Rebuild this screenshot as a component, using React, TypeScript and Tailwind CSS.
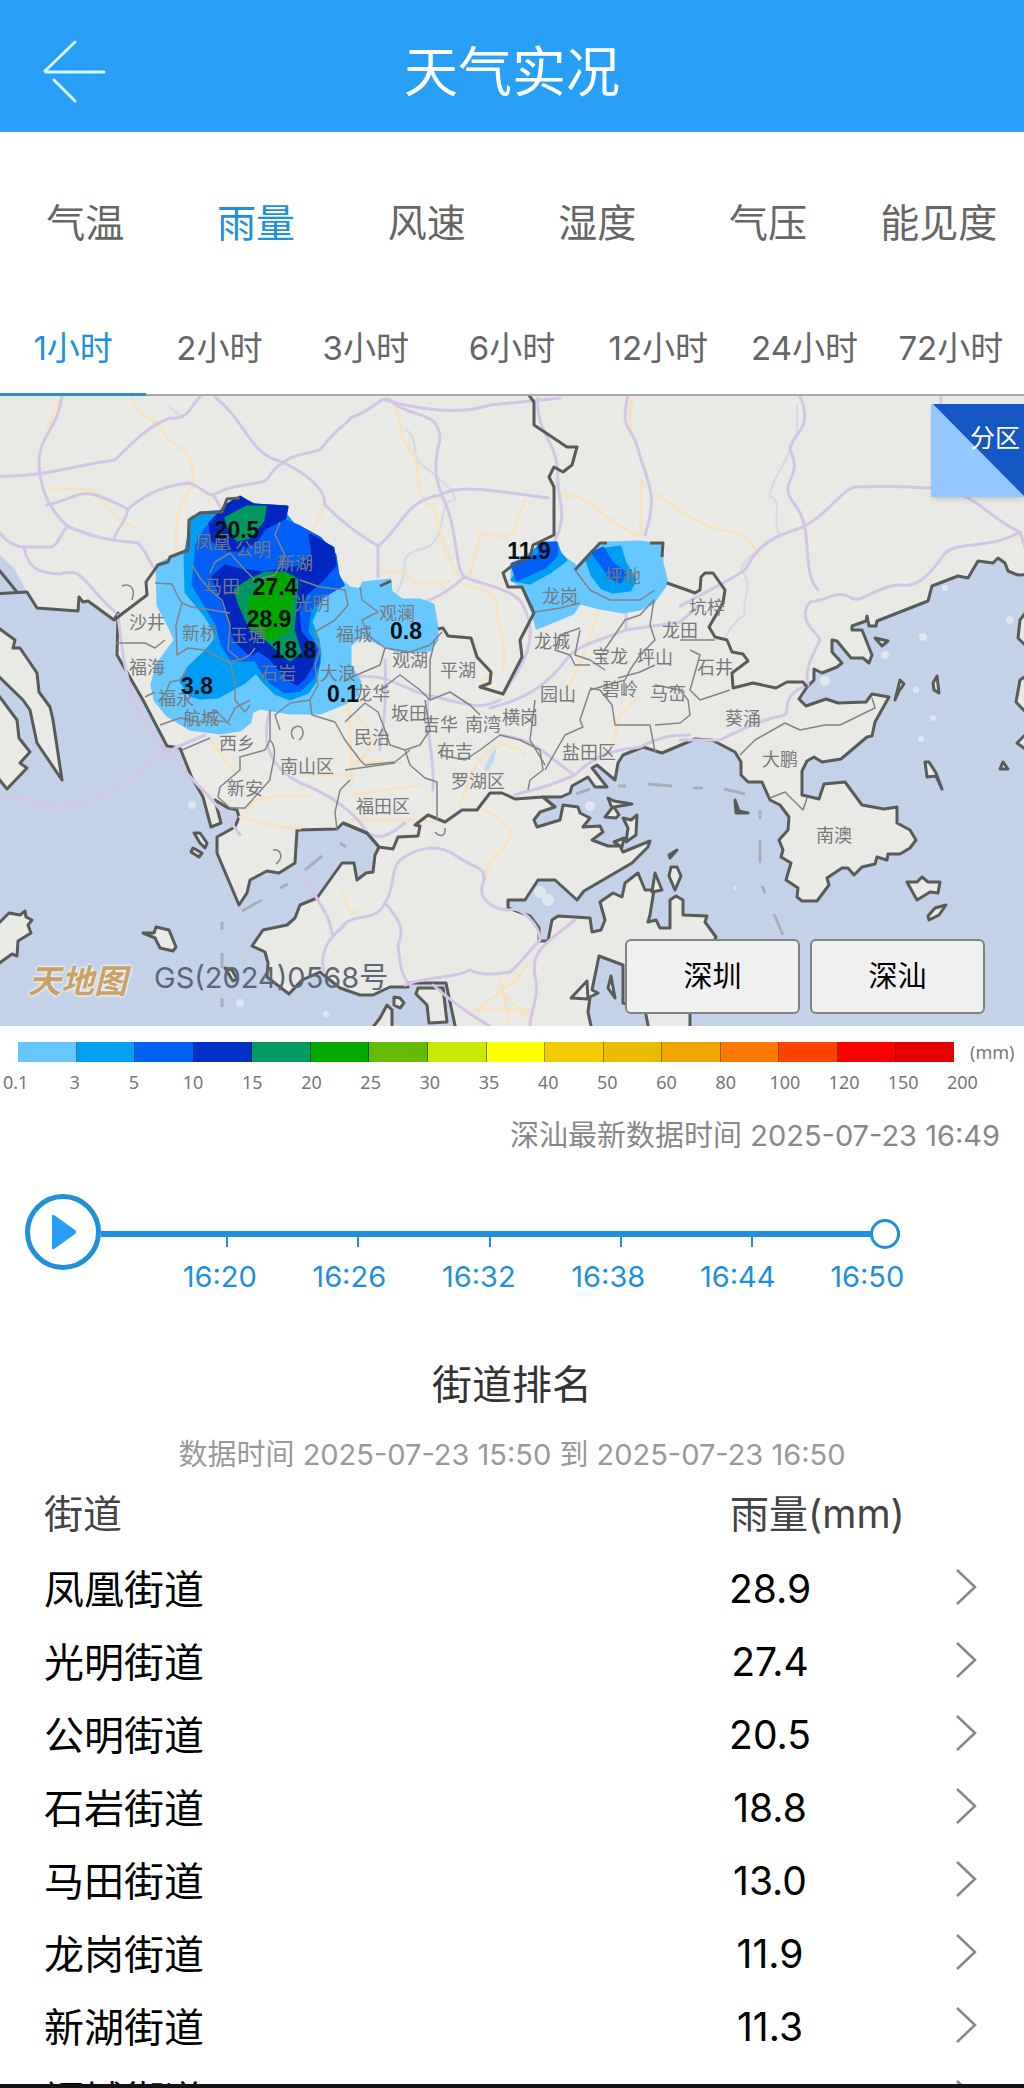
import React, { useState } from "react";

const METRICS = ["气温", "雨量", "风速", "湿度", "气压", "能见度"];
const HOURS = ["1小时", "2小时", "3小时", "6小时", "12小时", "24小时", "72小时"];
const TIMES = ["16:20", "16:26", "16:32", "16:38", "16:44", "16:50"];

const SCALE_COLORS = [
    "bg-[#66c8ff]", "bg-[#00a0f5]", "bg-[#0062f5]", "bg-[#0030c8]",
    "bg-[#009c62]", "bg-[#00a800]", "bg-[#66bb00]", "bg-[#c8e800]",
    "bg-[#ffff00]", "bg-[#f0cc00]", "bg-[#e8bc00]", "bg-[#f0a800]",
    "bg-[#ff7800]", "bg-[#ff4200]", "bg-[#ff0000]", "bg-[#e60000]",
];
const SCALE_LABELS = ["0.1", "3", "5", "10", "15", "20", "25", "30", "35", "40", "50", "60", "80", "100", "120", "150", "200"];

const STREETS = [
    { name: "凤凰街道", value: "28.9" },
    { name: "光明街道", value: "27.4" },
    { name: "公明街道", value: "20.5" },
    { name: "石岩街道", value: "18.8" },
    { name: "马田街道", value: "13.0" },
    { name: "龙岗街道", value: "11.9" },
    { name: "新湖街道", value: "11.3" },
    { name: "福城街道", value: "10.6" },
];

const WATER = [
    // Pearl River estuary and Shenzhen bay
    "-10,594 27,592 37,608 78,611 79,597 83,602 88,601 114,620 118,613 117,655 143,700 167,746 180,748 192,778 203,797 211,827 221,823 215,800 228,808 237,810 239,817 235,827 217,837 217,853 239,905 247,893 250,880 267,871 279,873 295,863 297,830 337,829 343,823 367,833 379,847 375,855 373,872 366,873 357,880 354,863 342,863 317,898 300,905 295,918 287,925 263,930 252,946 265,952 268,963 267,977 289,994 302,980 320,972 340,988 360,995 373,995 390,987 408,987 410,983 446,983 457,1035 -10,1035",
    // Mirs bay and the east
    "543,797 555,807 540,812 534,820 537,827 560,820 563,805 578,807 580,813 590,818 583,827 600,826 603,832 592,840 608,846 620,846 623,852 650,841 648,847 632,863 584,891 577,900 555,880 538,880 525,900 508,900 508,908 530,916 539,928 539,941 548,941 552,920 558,916 590,918 592,932 601,930 605,920 600,902 613,893 622,897 625,883 638,873 645,890 654,890 650,915 648,922 656,920 660,928 670,928 670,900 676,896 683,900 683,915 707,916 705,922 716,937 705,960 690,1010 690,1035 1035,1035 1035,574 1018,575 1008,571 1005,563 998,558 993,563 978,561 968,578 958,576 932,586 928,601 877,621 876,626 869,626 867,616 866,621 852,626 852,630 862,630 872,655 869,663 863,658 851,658 837,641 832,640 832,652 842,663 837,667 822,673 814,669 814,680 807,687 799,699 806,706 826,699 838,703 866,702 872,694 889,697 875,722 872,736 867,737 841,759 822,762 814,757 807,761 802,771 802,795 819,799 824,784 845,782 862,805 884,809 897,807 897,823 910,830 916,840 910,848 900,854 888,854 887,860 877,857 875,864 862,867 854,875 848,868 842,868 827,878 829,885 817,901 802,901 797,897 798,888 786,880 791,863 781,857 783,850 779,840 788,830 789,817 780,805 770,800 762,782 748,782 741,775 741,762 735,752 712,740 695,739 662,753 643,747 623,755 618,763 615,780 597,765 592,768 607,787 595,787 588,777 572,786 570,793 561,797",
    "599,956 623,965 623,1003 645,1010 650,1035 593,1035 588,1012 590,997 598,993 592,990",
];

const ISLANDS = [
    "-10,622 15,640 13,648 20,648 37,673 39,692 50,707 53,720 62,780 37,743 30,710 23,700 -10,668",
    "-10,684 17,720 19,738 30,752 20,763 27,768 7,789 -10,768",
    "-10,932 9,913 20,915 25,911 26,917 32,920 28,925 31,933 18,941 17,956 12,954 -10,970",
    "194,833 200,833 207,843 205,848 200,843",
    "193,848 202,853 199,857 191,852",
    "143,933 154,933 156,927 169,930 176,947 173,951 160,948 155,938",
    "225,968 232,970 237,979 233,981",
    "8,1031 25,1020 33,1014 38,1010 42,1006 50,1005 53,1010 53,1035",
    "418,988 443,988 447,1022 429,1023 427,1005 416,994",
    "394,997 400,998 404,1003 400,1008 394,1005",
    "367,1035 380,1018 387,1005 392,1010 392,1035",
    "608,798 614,801 632,804 614,807 619,815 616,818 605,817 612,808",
    "623,818 631,820 637,815 636,835 626,842 628,828",
    "614,842 624,838 622,847",
    "669,855 677,850 670,858",
    "655,873 662,890 652,892",
    "671,867 677,867 681,876 675,890 669,876",
    "571,998 587,981 588,999",
    "611,976 615,998 608,988",
    "875,638 888,641 882,646",
    "895,700 900,680 904,684 899,691",
    "933,683 937,676 939,693 934,690",
    "925,762 929,762 936,773 942,789 936,776 927,777",
    "1003,762 1008,769 1000,769",
    "735,800 739,811 748,813 736,813",
    "907,882 917,882 922,877 928,882 940,882 938,893 930,892 917,900",
    "946,905 939,915 929,920 928,916 935,908",
    "1035,600 1020,620 1018,638 1035,655",
    "1035,670 1020,680 1016,702 1035,722",
    "1035,728 1025,735 1017,743 1035,756",
].filter((p) => !p.startsWith("8,1031"));

const BORDERS = [
    "-5,565 17,592",
    "114,620 147,595 146,582 158,565 168,562 170,557 188,550 189,520 200,513 222,512 227,499 240,498",
    "380,586 391,581",
    "438,629 443,628 448,636 471,638 477,657 491,672 490,683 480,687 503,694 522,657 520,640 534,613 522,587 508,587 503,573 513,565 530,557 533,545 554,535 554,487 549,477 554,467 563,472 572,465 577,447 567,447 534,425 534,402 528,394",
    "575,570 588,556 600,543 607,543",
    "650,543 663,543 662,557",
    "667,583 687,590 695,593 700,590 701,577 705,573 713,573 725,590 723,603 709,627 715,637 727,640 732,652 743,654 748,661 732,673 733,688 753,683 776,688 787,682 803,682 807,687",
    "343,823 367,833 379,847 393,849 398,837 418,836 420,826 415,825 428,815 445,822 462,810 477,810 490,793 502,793 515,799 543,797 555,807",
];

const MOTORWAYS = [
    "M62 396C58 430 38 435 39 465C40 490 50 510 67 526C100 540 112 540 138 543C150 555 150 570 160 570",
    "M0 476C40 478 75 465 115 460C135 440 150 425 170 418C190 420 190 405 200 397",
    "M47 505C70 500 80 490 95 495C112 500 125 508 128 509C150 490 170 485 190 483C205 490 210 498 215 494C240 480 265 488 270 475C285 455 300 455 320 450C335 430 345 425 350 419",
    "M128 509C125 525 115 530 114 540M67 526C58 540 55 548 50 547H22C12 545 5 540 0 533",
    "M215 397C245 420 250 455 280 461C310 475 325 490 325 505C345 525 360 535 378 546C400 530 405 500 440 495C460 483 500 492 548 498",
    "M24 547C28 570 40 573 60 574C85 568 80 580 115 612",
    "M213 494L222 510",
    "M0 798C20 792 40 807 60 807C110 805 140 765 175 748L205 735",
    "M118 615C122 650 125 680 140 715C165 760 210 790 240 835",
    "M350 418C375 410 380 395 390 400C410 420 440 408 440 440C430 475 440 490 448 510C458 540 455 565 464 577C440 600 420 605 400 605",
    "M378 546V577M464 577C490 587 520 590 525 610C540 640 520 670 503 694",
    "M385 400C420 410 460 415 490 405L560 398",
    "M538 398C535 430 555 440 558 470C555 500 570 510 555 540",
    "M628 396C620 430 630 425 637 445C645 480 660 490 645 535M626 605V630C600 640 580 645 570 655C545 690 520 700 490 708",
    "M800 396C815 430 790 435 790 450C805 480 775 480 795 505C815 530 800 570 818 590",
    "M680 606C710 590 730 580 745 570C760 540 780 535 795 530C825 520 840 490 855 487C900 485 920 488 932 488C975 490 990 520 1020 532M1020 532C990 550 960 540 945 553C920 590 910 585 895 585C870 590 860 605 850 597C835 590 830 600 810 602C795 620 820 635 820 640C810 660 805 670 808 685C780 695 790 710 785 715C760 720 740 730 720 740H680",
    "M1020 532L1026 550M626 630L680 622 700 605M941 396V410",
    "M270 710C255 760 290 780 310 787C340 800 360 820 365 830C380 845 395 830 405 823",
    "M345 678C390 670 400 690 428 695C470 705 480 710 500 700M428 700C425 740 435 750 433 790M385 660C388 720 380 740 380 750",
    "M500 735C540 740 550 760 575 775C540 790 530 790 515 795M575 775C600 750 620 750 640 747C665 735 675 735 690 735",
    "M302 874C320 905 330 915 332 934M340 930C350 910 375 925 385 903C395 890 390 870 400 860C420 845 440 845 455 855C475 870 485 865 484 880C475 900 495 910 510 910C520 905 540 925 540 940C525 955 520 965 510 972C490 975 480 975 470 970C450 980 430 975 405 985",
    "M385 903C400 920 405 930 398 945C400 960 400 975 410 985M575 920C550 940 530 950 535 975C540 1000 530 1010 530 1026",
    "M345 925C325 940 320 955 324 972M433 985C450 1000 470 1015 490 1026",
];

const ROADS = [
    "M132 398C140 420 160 420 162 430C175 455 195 440 193 485C170 520 178 530 176 555",
    "M50 490C90 485 100 490 105 505C115 520 130 525 135 527M60 400C55 410 50 420 48 428",
    "M392 400C405 420 395 440 415 455C420 480 415 500 435 508C440 540 450 560 457 575M380 572H405C410 590 430 580 450 582",
    "M470 575C475 550 480 545 480 532C500 540 510 535 515 532C515 520 525 505 525 500M464 585C490 590 500 595 497 615C505 640 505 660 503 668",
    "M560 496C590 490 610 530 640 535L642 480M655 492C680 510 700 530 735 532C750 540 755 545 760 560",
    "M325 507L312 530M633 398C625 425 635 440 640 455",
    "M355 715C380 730 370 760 355 762H400M340 680C350 700 350 730 352 785M352 795C370 790 400 790 420 785M350 820H410L440 822",
    "M210 740L235 772M240 817C270 825 280 828 300 828M245 812C250 800 260 795 310 795M310 775H350",
    "M460 805C470 780 475 750 505 745C520 750 520 750 525 755M485 810C520 830 515 835 500 850C490 865 485 870 485 880",
    "M527 965C520 980 490 1000 475 1010H530M500 975C505 1010 510 1010 508 1026M500 990L530 1020",
    "M560 700C580 670 590 640 598 610M480 690C480 680 490 675 495 672M635 700C610 720 620 730 612 745",
    "M340 890C350 900 345 920 360 910",
];

const RIVERS = [
    "M407 430C420 440 410 460 425 467C440 480 455 490 455 500C440 500 445 520 438 535C430 555 410 545 405 560C405 575 400 590 395 595",
    "M797 405V430C790 460 770 480 770 497C785 500 770 520 780 535C760 550 740 560 742 570C755 590 740 600 745 615C735 620 725 635 725 640",
    "M168 405L182 418",
];

const DISTRICTS = [
    "M155 583L172 584 178 597 182 603 176 625 177 655 188 648 205 650 228 662 238 660M116 643L145 643 155 648 165 640",
    "M182 603L192 607 212 610 230 613M192 565L200 578 210 590 222 600 230 625 228 650 240 660 250 655 255 648M210 573L215 562 230 553 245 570 255 580 275 575 285 555 275 535 280 522",
    "M230 662L235 680 235 700 245 712 250 705M188 668L180 680 170 682 165 695M145 697L155 692M300 580L320 587 345 590 348 605 335 620 315 632 320 650 315 665 318 685 310 700",
    "M160 725L180 718 200 722 215 710 230 725M210 720L228 722 235 708 250 700M280 730L275 715 290 703 310 700 312 715 335 722 345 740 360 760 365 765 395 762 410 750",
    "M182 750L210 738M270 740C280 750 270 770 270 780L245 808 230 808 218 797 220 787 240 770 240 757 265 750 270 740L270 710",
    "M360 587L362 600 378 612 362 620 368 635 385 648 410 652 430 645 442 632M385 648L380 665 345 680M380 690L400 675 420 690 430 700 430 660 435 640",
    "M345 722L365 703 378 712 385 730 390 745 405 750 420 745 430 730 425 700M405 750L410 765 425 778 437 782V820M345 770L395 763M430 700L450 692 470 705 480 715",
    "M440 755L465 760 480 750 500 735 520 740 540 750 543 770 530 780 528 790",
    "M535 612L560 608 580 603M580 628L560 635 555 650 570 655 575 665 590 665M603 652L625 620 640 615 654 600 650 625 655 640 640 655 630 670 625 680 590 690 580 720 583 727 565 735 545 770",
    "M535 700L530 740 545 765M580 630L575 655 590 660 605 670M590 688L600 690 612 705 615 725 650 725 655 752M655 685L680 690 688 700 690 715 680 723 655 725M690 650L700 655 690 690 700 700 730 690M680 640L700 640 715 640M618 678L640 672 655 665",
    "M740 755L755 740 785 723 800 730 825 725 840 725 875 708 872 698M770 798L785 792 803 810 807 798",
    "M337 830L335 812 340 790 350 780M575 570L590 590 610 600 640 600 655 590",
    "M295 727C303 723 306 735 299 740M294 739C290 735 291 729 295 727M273 850C281 848 284 858 276 864M122 586C130 583 136 588 132 600M435 832C440 838 446 836 445 828",
];

const RAIN = [
    { fill: "#66c8ff", points: "157,565 188,550 192,517 213,512 280,508 340,580 350,588 360,590 363,583 390,580 391,592 402,600 420,600 433,605 437,627 437,640 430,650 415,652 395,650 378,643 362,635 350,645 350,665 360,682 357,695 345,703 320,713 290,713 260,708 252,712 250,722 240,730 220,733 190,729 167,715 155,700 152,685 157,665 168,650 175,640 170,628 158,605" },
    { fill: "#009df5", points: "192,520 200,513 213,512 280,508 343,585 330,590 320,600 311,622 318,640 320,655 316,680 308,692 290,699 275,693 264,682 256,672 245,682 218,697 200,698 190,695 181,682 188,668 205,652 217,638 213,628 205,615 195,603 186,592 185,555" },
    { fill: "#0060f8", points: "197,545 205,530 215,518 240,498 255,505 287,507 283,520 300,527 320,538 335,555 338,575 343,585 322,597 310,610 307,632 318,650 319,662 313,678 300,690 285,692 270,682 260,668 256,660 232,660 222,645 217,625 207,608 193,585" },
    { fill: "#0028c0", points: "210,523 227,505 240,497 253,505 287,507 285,518 265,528 255,542 240,550 228,550 212,540" },
    { fill: "#0028c0", points: "310,535 333,548 335,565 322,580 305,595 298,612 300,632 315,650 312,664 305,677 297,684 287,678 270,658 258,650 250,655 235,640 228,615 213,577 225,566 240,570 265,573 300,567 313,555" },
    { fill: "#009860", points: "226,518 247,507 265,507 263,520 250,537 237,540 230,530" },
    { fill: "#009860", points: "235,590 250,580 265,573 285,573 297,580 295,610 293,630 300,652 290,660 278,650 265,638 250,628 240,605" },
    { fill: "#00a800", points: "255,590 275,573 293,577 291,605 288,630 270,640 255,625 248,608" },
    { fill: "#66c8ff", points: "512,565 540,547 557,543 560,555 577,567 593,550 607,543 640,542 662,545 662,563 667,583 653,603 640,609 623,612 600,608 580,603 573,613 537,628 533,613 522,587 512,580" },
    { fill: "#009df5", points: "512,580 530,555 540,545 556,543 560,553 566,560 550,572 530,583" },
    { fill: "#009df5", points: "587,560 600,550 620,547 625,563 635,580 630,590 613,592 602,588 592,575" },
    { fill: "#0060f8", points: "512,564 540,555 538,543 556,543 557,555 545,567 517,580" },
    { fill: "#0060f8", points: "593,553 603,548 612,563 625,573 620,582 610,577" },
];

const PLACES: [string, number, number][] = [
    ["沙井", 147, 621], ["新桥", 200, 632], ["福海", 147, 666], ["福永", 176, 697],
    ["航城", 201, 717], ["西乡", 237, 742], ["新安", 245, 787], ["南山区", 307, 765],
    ["马田", 222, 585], ["公明", 253, 548], ["凤凰", 213, 541], ["新湖", 295, 562],
    ["光明", 312, 602], ["玉塘", 248, 634], ["石岩", 278, 672], ["大浪", 338, 672],
    ["福城", 354, 633], ["观澜", 397, 612], ["观湖", 410, 659], ["平湖", 458, 669],
    ["龙华", 372, 692], ["坂田", 409, 712], ["吉华", 440, 723], ["南湾", 483, 723],
    ["横岗", 520, 716], ["民治", 372, 736], ["布吉", 455, 750], ["罗湖区", 478, 780],
    ["福田区", 383, 805], ["盐田区", 589, 751], ["园山", 558, 693], ["碧岭", 620, 688],
    ["马峦", 668, 692], ["宝龙", 610, 655], ["坪山", 655, 656], ["龙城", 552, 640],
    ["龙岗", 560, 595], ["坪地", 623, 575], ["坑梓", 707, 606], ["龙田", 680, 629],
    ["石井", 715, 666], ["葵涌", 743, 717], ["大鹏", 780, 758], ["南澳", 834, 834],
];

const READINGS: [string, number, number][] = [
    ["20.5", 237, 530], ["27.4", 275, 587], ["28.9", 269, 619], ["18.8", 294, 650],
    ["3.8", 197, 686], ["0.1", 343, 694], ["0.8", 406, 631], ["11.9", 529, 551],
];

function RainMap() {
    return (
        <svg viewBox="0 396 1024 630" className="block w-full" role="img" aria-label="雨量分布图">
            <rect x="0" y="396" width="1024" height="630" fill="#e9eae6" />
            <path d="M0 555L14 568 27 592H0Z" fill="#c3d2e8" />
            <g fill="#c3d2e8" stroke="#595a5a" strokeWidth="3" strokeLinejoin="round">
                {WATER.map((p) => <polygon key={p} points={p} />)}
            </g>
            <g fill="#e9eae6" stroke="#595a5a" strokeWidth="3" strokeLinejoin="round">
                {ISLANDS.map((p) => <polygon key={p} points={p} />)}
            </g>
            <path d="M484 770L490 755 497 747 494 760 488 772Z" fill="#c3d9f2" />

            <g fill="none" strokeLinecap="round" strokeLinejoin="round">
                <g stroke="#d3dbe4" strokeWidth="2">{RIVERS.map((d) => <path key={d} d={d} />)}</g>
                <g stroke="#f6e2c2" strokeWidth="3">{ROADS.map((d) => <path key={d} d={d} />)}</g>
                <g stroke="#d3c6e6" strokeWidth="3">{MOTORWAYS.map((d) => <path key={d} d={d} />)}</g>
            </g>

            {/* sea boundary dashes */}
            <path
                d="M305 870L322 856M280 888L288 884M242 911L262 900M222 922V930M222 953V968M222 998V1007M340 843L346 847M576 794L590 789M618 786H626M648 784L672 786M693 788H703M724 789L745 794M760 810V819M760 840V863M762 886L765 893M774 914L783 935"
                fill="none"
                stroke="#a8aeb8"
                strokeWidth="3"
            />
            <g fill="#e6edf3" opacity=".8">
                <circle cx="192" cy="805" r="4" /><circle cx="240" cy="1003" r="4" /><circle cx="326" cy="1014" r="3" />
                <circle cx="540" cy="892" r="6" /><circle cx="548" cy="900" r="6" /><circle cx="825" cy="681" r="5" />
                <circle cx="923" cy="637" r="4" /><circle cx="1010" cy="620" r="4" /><circle cx="885" cy="655" r="4" />
                <circle cx="921" cy="739" r="3" /><circle cx="933" cy="718" r="3" /><circle cx="945" cy="588" r="3" />
                <circle cx="916" cy="690" r="3" /><circle cx="590" cy="806" r="5" /><circle cx="735" cy="888" r="2" />
            </g>

            {RAIN.map((r, i) => (
                <polygon key={i} points={r.points} fill={r.fill} stroke={r.fill} strokeWidth="3" strokeLinejoin="round" />
            ))}

            <g fill="none" stroke="#595a5a" strokeWidth="3" strokeLinejoin="round">
                {BORDERS.map((p) => <polyline key={p} points={p} />)}
            </g>
            <g fill="none" stroke="#838486" strokeWidth="1.5" strokeLinejoin="round">
                {DISTRICTS.map((d) => <path key={d} d={d} />)}
            </g>

            <g className="font-['Noto_Sans_CJK_SC',sans-serif]" fontSize="18" fill="#77797b" textAnchor="middle" dominantBaseline="central">
                {PLACES.map(([name, x, y]) => <text key={name} x={x} y={y}>{name}</text>)}
            </g>
            <g className="font-['Liberation_Sans',sans-serif]" fontSize="23" fontWeight="700" fill="#0b1013" textAnchor="middle" dominantBaseline="central">
                {READINGS.map(([value, x, y]) => <text key={value} x={x} y={y}>{value}</text>)}
            </g>
        </svg>
    );
}

function Header() {
    return (
        <header className="relative flex h-[132px] shrink-0 items-center justify-center bg-[#28a0f7] pt-3.5 text-white">
            <button type="button" aria-label="返回" className="absolute left-10 top-9">
                <svg width="68" height="72" viewBox="0 0 68 72" fill="none" stroke="#d5f6ff" strokeWidth="3" strokeLinecap="round">
                    <path d="M35 6L5 35M6 36H64M14 44L35 65" />
                </svg>
            </button>
            <h1 className="text-[54px] leading-none">天气实况</h1>
        </header>
    );
}

function Legend() {
    return (
        <div className="pt-4 font-['Noto_Sans',sans-serif] text-lg leading-5 text-[#777]">
            <div className="flex items-center pl-[18px]">
                <div className="flex h-5 flex-1 divide-x divide-black/40">
                    {SCALE_COLORS.map((c) => <div key={c} className={`flex-1 ${c}`} />)}
                </div>
                <span className="w-[70px] pl-4">(mm)</span>
            </div>
            <div className="-ml-3.5 mr-8 mt-2.5 grid grid-cols-17 text-center">
                {SCALE_LABELS.map((l) => <span key={l}>{l}</span>)}
            </div>
        </div>
    );
}

function Timeline() {
    const [step, setStep] = useState(30);

    return (
        <div className="mt-[38px] flex pl-[25px] pr-[124px] text-[#1f8fdb]">
            <button type="button" aria-label="播放" className="flex size-[76px] shrink-0 items-center justify-center rounded-full border-[5px] border-[#1f90dd]">
                <svg width="28" height="36" viewBox="0 0 28 36" fill="#279df5">
                    <path d="M3 2Q3 0 5 1L26 16Q28 18 26 20L5 35Q3 36 3 34Z" />
                </svg>
            </button>
            <div className="flex-1 pt-[25px]">
                <input
                    type="range"
                    min={0}
                    max={30}
                    value={step}
                    onChange={(e) => setStep(Number(e.target.value))}
                    aria-label="时间"
                    className="block h-[30px] w-full appearance-none bg-transparent [&::-webkit-slider-runnable-track]:h-1.5 [&::-webkit-slider-runnable-track]:bg-[#1f90dd] [&::-webkit-slider-thumb]:-mt-3 [&::-webkit-slider-thumb]:size-[30px] [&::-webkit-slider-thumb]:appearance-none [&::-webkit-slider-thumb]:rounded-full [&::-webkit-slider-thumb]:border-[3px] [&::-webkit-slider-thumb]:border-solid [&::-webkit-slider-thumb]:border-[#1f90dd] [&::-webkit-slider-thumb]:bg-white"
                />
                <div className="-ml-1 -mt-3 mr-4 grid grid-cols-6">
                    {TIMES.map((t, i) => (
                        <span key={t} className={`h-2.5 justify-self-end border-r-2 ${i === 5 ? "border-transparent" : "border-[#1f90dd]"}`} />
                    ))}
                </div>
                <div className="-mr-8 ml-[54px] mt-3 grid grid-cols-6 text-center text-[29px] leading-9">
                    {TIMES.map((t) => <span key={t}>{t}</span>)}
                </div>
            </div>
        </div>
    );
}

export default function App() {
    const [metric, setMetric] = useState("雨量");
    const [hour, setHour] = useState("1小时");

    return (
        <div className="flex h-screen flex-col overflow-hidden bg-white font-['Inter','Noto_Sans_CJK_SC',sans-serif]">
            <Header />
            <main className="flex-1 overflow-hidden">
                <nav className="grid grid-cols-6 pt-[62px]">
                    {METRICS.map((m) => (
                        <button
                            key={m}
                            type="button"
                            onClick={() => setMetric(m)}
                            className={`h-14 text-[39px] leading-none ${m === metric ? "text-[#1f90dd]" : "text-[#666]"}`}
                        >
                            {m}
                        </button>
                    ))}
                </nav>
                <nav className="mt-[50px] grid grid-cols-7 border-b-2 border-[#aaa]">
                    {HOURS.map((h) => (
                        <button
                            key={h}
                            type="button"
                            onClick={() => setHour(h)}
                            className={`-mb-0.5 h-24 border-b-[3px] pt-1 text-[33px] leading-none ${h === hour ? "border-[#2f8fc9] text-[#1f90dd]" : "border-transparent text-[#666]"}`}
                        >
                            {h}
                        </button>
                    ))}
                </nav>

                <section className="relative overflow-hidden">
                    <RainMap />
                    <button type="button" className="absolute right-0 top-2 h-[93px] w-[93px] bg-[#94c6ff] text-[25px] text-white shadow-md">
                        <svg viewBox="0 0 93 93" className="absolute inset-0 size-full">
                            <path d="M2 0H93V92Z" fill="#1557c4" />
                        </svg>
                        <span className="absolute right-1 top-4">分区</span>
                    </button>
                    <span className="absolute bottom-7 left-7 text-[33px] font-bold italic leading-none text-[#c8a266] [text-shadow:0_0_3px_#fff,0_0_3px_#fff]">天地图</span>
                    <span className="absolute bottom-7 left-[154px] text-[29px] leading-10 text-[#5c6678]">GS(2024)0568号</span>
                    <div className="absolute bottom-3 right-[39px] flex gap-2.5">
                        {["深圳", "深汕"].map((c) => (
                            <button key={c} type="button" className="h-[75px] w-[175px] rounded-md border-2 border-[#808285] bg-[#f0f0f0] text-[29px] text-black">
                                {c}
                            </button>
                        ))}
                    </div>
                </section>

                <Legend />
                <p className="mt-6 pr-6 text-right text-[29px] leading-10 text-[#888]">深汕最新数据时间 2025-07-23 16:49</p>
                <Timeline />

                <section className="mt-14">
                    <h2 className="pt-2 text-center text-[40px] leading-[52px] text-[#333]">街道排名</h2>
                    <p className="mt-6 text-center text-[29px] leading-10 text-[#999]">数据时间 2025-07-23 15:50 到 2025-07-23 16:50</p>
                    <table className="w-full table-fixed text-left text-[40px]">
                        <thead className="text-[#444]">
                            <tr className="h-[75px]">
                                <th className="pl-11 pt-1 text-[39px] font-normal">街道</th>
                                <th className="w-[180px] pt-1 text-[39px] font-normal">雨量(mm)</th>
                                <th className="w-[114px]" />
                            </tr>
                        </thead>
                        <tbody className="text-black">
                            {STREETS.map((s) => (
                                <tr key={s.name} className="h-[73px]">
                                    <td className="pl-11 pt-1.5">{s.name}</td>
                                    <td className="pt-1.5 text-[39px]"><div className="flex w-20 justify-center">{s.value}</div></td>
                                    <td>
                                        <button type="button" aria-label={s.name} className="ml-11 block">
                                            <svg width="24" height="38" viewBox="0 0 24 38" fill="none" stroke="#888" strokeWidth="2.5">
                                                <path d="M3 2L21 19 3 36" />
                                            </svg>
                                        </button>
                                    </td>
                                </tr>
                            ))}
                        </tbody>
                    </table>
                </section>
            </main>
            <div className="h-1 shrink-0 bg-[#141218]" />
        </div>
    );
}
